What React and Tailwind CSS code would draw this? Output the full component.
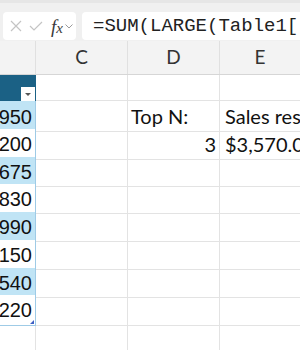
import React from 'react';

const rows = ['950', '200', '675', '830', '990', '150', '540', '220'];

const cellText = { fontFamily: '"Liberation Sans", Arial, sans-serif' };
const uiText = { fontFamily: 'Lato, "Noto Sans", sans-serif' };

const FormulaBar = () => (
    <div className="h-[41px] bg-[#f0f0f0] border-t-[3px] border-[#e6e6e6] flex items-start pt-[9px] pl-[3px] gap-[6px]">
        <div className="w-[73px] h-[28px] bg-white rounded-[4px] flex items-center pl-[7px] gap-[7px] text-[#c4c4c4]">
            <svg width="12" height="12" viewBox="0 0 12 12" fill="none" stroke="currentColor" strokeWidth="1.2">
                <path d="M1 1 L11 11 M11 1 L1 11" />
            </svg>
            <svg width="14" height="10" viewBox="0 0 14 10" fill="none" stroke="currentColor" strokeWidth="1.2">
                <path d="M1 5 L5 9 L13 1" />
            </svg>
            <span className="text-[#3a3a3a] italic text-[19px] leading-none ml-[1px]" style={{ fontFamily: '"Liberation Serif", serif' }}>
                f<span className="text-[15px]">x</span>
            </span>
            <svg width="8" height="5" viewBox="0 0 8 5" fill="none" stroke="#9a9a9a" strokeWidth="1" className="-ml-[5px]">
                <path d="M0.5 0.5 L4 4 L7.5 0.5" />
            </svg>
        </div>
        <div className="flex-1 h-[28px] bg-white rounded-l-[4px] flex items-center pl-[11px] overflow-hidden whitespace-nowrap text-[19px] text-[#222]" style={{ fontFamily: '"Liberation Mono", monospace' }}>
            =SUM(LARGE(Table1[
        </div>
    </div>
);

export default function App() {
    return (
        <div className="w-[300px] h-[350px] overflow-hidden bg-white">
            <FormulaBar />

            {/* column headers */}
            <div className="grid grid-cols-[36px_92px_92px_1fr] h-[34px] bg-[#f3f3f3] border-b border-[#d6d6d6] text-[#333] text-[19px]" style={uiText}>
                <div className="border-r border-[#e0e0e0]"></div>
                <div className="border-r border-[#e0e0e0] flex items-center justify-center">C</div>
                <div className="border-r border-[#e0e0e0] flex items-center justify-center">D</div>
                <div className="flex items-center justify-center">E</div>
            </div>

            {/* table header row */}
            <div className="grid grid-cols-[36px_92px_92px_1fr] h-[26px]">
                <div className="bg-[#1b6185] relative">
                    <div className="absolute right-[1px] bottom-0 w-[14px] h-[14px] bg-white flex items-center justify-center">
                        <div className="w-0 h-0 border-l-[3px] border-r-[3px] border-t-[3px] border-l-transparent border-r-transparent border-t-[#555]"></div>
                    </div>
                </div>
                <div className="border-r border-b border-[#e3e3e3]"></div>
                <div className="border-r border-b border-[#e3e3e3]"></div>
                <div className="border-b border-[#e3e3e3]"></div>
            </div>

            {rows.map((v, i) => (
                <div key={v} className="grid grid-cols-[36px_92px_92px_1fr] h-[27.75px] text-[20px] text-[#111]">
                    <div
                        className={`relative flex items-center justify-end pr-[3px] border-r border-[#9fcbe6] ${i % 2 === 0 ? 'bg-[#c0e4f5]' : 'bg-white'} ${i === 7 ? 'border-b' : ''}`}
                        style={cellText}
                    >
                        {v}
                        {i === 7 && (
                            <div className="absolute right-[1px] bottom-[1px] w-0 h-0" style={{ borderBottom: '4px solid #3d5fc4', borderLeft: '4px solid transparent' }}></div>
                        )}
                    </div>
                    <div className="border-r border-b border-[#e3e3e3]"></div>
                    <div className="border-r border-b border-[#e3e3e3] flex items-center pl-[3px] justify-start" style={uiText}>
                        {i === 0 && <span className="text-[20px]">Top N:</span>}
                        {i === 1 && <span className="ml-auto pr-[3px] text-[20px]">3</span>}
                    </div>
                    <div className="border-b border-[#e3e3e3] flex items-center pl-[5px] whitespace-nowrap overflow-hidden" style={uiText}>
                        {i === 0 && <span className="text-[20px]">Sales res</span>}
                        {i === 1 && <span className="text-[20px]">$3,570.0</span>}
                    </div>
                </div>
            ))}

            <div className="grid grid-cols-[36px_92px_92px_1fr] h-[27px]">
                <div className="border-r border-[#e3e3e3]"></div>
                <div className="border-r border-[#e3e3e3]"></div>
                <div className="border-r border-[#e3e3e3]"></div>
                <div></div>
            </div>
        </div>
    );
}
